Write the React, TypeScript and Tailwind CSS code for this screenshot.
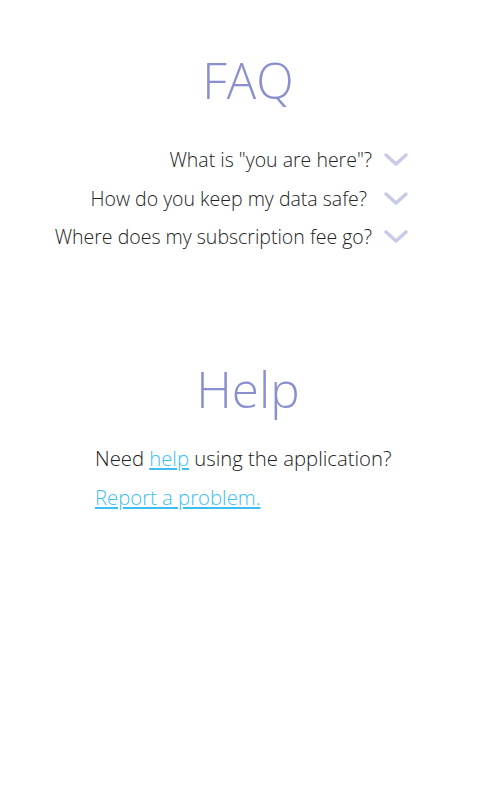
import React from 'react';

const Chevron = () => (
  <svg className="w-[26px] h-[16px] shrink-0" viewBox="0 0 26 16" fill="none" stroke="#c8cae7" strokeWidth={3.5} strokeLinecap="round" strokeLinejoin="round">
    <path d="M3 3l10 9 10-9" />
  </svg>
);

const questions = [
  'What is "you are here"?',
  'How do you keep my data safe?\u00a0',
  'Where does my subscription fee go?',
];

export default function App() {
  return (
    <div className="min-h-[786px] w-[500px] bg-white font-['Open_Sans',sans-serif] font-light text-[#222]">
      {/* FAQ */}
      <h1 className="pt-[44px] pr-[4px] text-center text-[49px] leading-[72px] font-light text-[#8a8fd0]">FAQ</h1>
      <div className="mt-[30px] flex flex-col items-end gap-[10.5px] pr-[91px]">
        {questions.map((q) => (
          <div key={q} className="flex items-center gap-[11px]">
            <span className="text-[19.5px] leading-[28px] whitespace-pre">{q}</span>
            <Chevron />
          </div>
        ))}
      </div>

      {/* Help */}
      <h1 className="mt-[102px] pr-[4px] text-center text-[49.5px] leading-[72px] font-light text-[#8a8fd0]">Help</h1>
      <div className="mt-[19px] pl-[95px] flex flex-col gap-[11px]">
        <p className="text-[20.3px] leading-[28px]">
          Need <a href="#" className="text-[#3cbef0] underline">help</a> using the application?
        </p>
        <a href="#" className="text-[20.3px] leading-[28px] text-[#3cbef0] underline">Report a problem.</a>
      </div>
    </div>
  );
}
